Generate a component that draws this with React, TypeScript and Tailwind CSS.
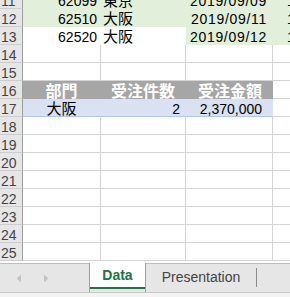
import React from "react";

const GRID = "border-[#d4d4d4]";
const NUM = "font-['Liberation_Sans',Arial,sans-serif] text-[14px] leading-none text-black";
const JP = "font-['Noto_Sans_CJK_JP','Noto_Sans_CJK_SC',sans-serif] text-[15px] leading-none text-black";
const HDR = "font-['Noto_Sans_CJK_JP','Noto_Sans_CJK_SC',sans-serif] text-[16px] leading-none font-bold text-white";

function RowHead({ n }: { n: number }) {
  return (
    <div className="w-[23px] shrink-0 h-full bg-[#e6e6e6] border-r border-r-[#9e9e9e] border-b border-b-[#cdcdcd] flex items-center pl-[1px] pt-[2px]">
      <span className={"font-['Liberation_Sans',Arial,sans-serif] text-[14px] leading-none text-[#444]"}>{n}</span>
    </div>
  );
}

function EmptyRow({ n }: { n: number }) {
  return (
    <div className="flex h-[18px]">
      <RowHead n={n} />
      <div className={"w-[78px] shrink-0 border-r border-b " + GRID} />
      <div className={"w-[85px] shrink-0 border-r border-b " + GRID} />
      <div className={"w-[87px] shrink-0 border-r border-b " + GRID} />
      <div className={"flex-1 border-b " + GRID} />
    </div>
  );
}

function DataRow({
  n,
  id,
  city,
  date,
  greenLeft,
}: {
  n: number;
  id: string;
  city: string;
  date: string;
  greenLeft: boolean;
}) {
  const left = greenLeft ? "bg-[#e2efda] border-[#e2efda]" : "bg-white border-white";
  const right = "bg-[#e2efda] border-[#e2efda]";
  return (
    <div className="flex h-[18px]">
      <RowHead n={n} />
      <div className={"w-[78px] shrink-0 border-r border-b flex items-center justify-end pr-[3px] pt-[2px] " + left}>
        <span className={NUM}>{id}</span>
      </div>
      <div className={"w-[85px] shrink-0 border-r border-b flex items-center pl-[2px] " + left}>
        <span className={JP}>{city}</span>
      </div>
      <div className={"w-[87px] shrink-0 border-r border-b flex items-center justify-end pr-[5px] pt-[2px] " + right}>
        <span className={NUM + " tracking-[0.7px]"}>{date}</span>
      </div>
      <div className={"flex-1 border-b flex items-center pl-[14px] pt-[2px] overflow-hidden " + right}>
        <span className={NUM}>1</span>
      </div>
    </div>
  );
}

function TableHeaderRow() {
  const g = "bg-[#a6a6a6] border-[#a6a6a6]";
  return (
    <div className="flex h-[18px]">
      <RowHead n={16} />
      <div className={"w-[78px] shrink-0 border-r border-b flex items-center justify-center " + g}>
        <span className={HDR}>部門</span>
      </div>
      <div className={"w-[85px] shrink-0 border-r border-b flex items-center justify-center " + g}>
        <span className={HDR}>受注件数</span>
      </div>
      <div className={"w-[87px] shrink-0 border-r border-b flex items-center justify-center pl-[2px] " + g}>
        <span className={HDR}>受注金額</span>
      </div>
      <div className={"flex-1 border-b " + GRID} />
    </div>
  );
}

function TableBodyRow() {
  const b = "bg-[#d9e1f2] border-[#d9e1f2] border-b-[#b4c6e7]";
  return (
    <div className="flex h-[18px]">
      <RowHead n={17} />
      <div className={"w-[78px] shrink-0 border-r border-b flex items-center justify-center " + b}>
        <span className={JP}>大阪</span>
      </div>
      <div className={"w-[85px] shrink-0 border-r border-b flex items-center justify-end pr-[5px] pt-[2px] " + b}>
        <span className={NUM}>2</span>
      </div>
      <div className={"w-[87px] shrink-0 border-r border-b flex items-center justify-end pr-[10px] pt-[2px] " + b}>
        <span className={NUM}>2,370,000</span>
      </div>
      <div className={"flex-1 border-b " + GRID} />
    </div>
  );
}

export default function App() {
  return (
    <div className="w-[290px] h-[297px] overflow-hidden bg-white flex flex-col">
      <div className="-mt-[9px] flex flex-col shrink-0">
        <DataRow n={11} id="62099" city="東京" date="2019/09/09" greenLeft={true} />
        <DataRow n={12} id="62510" city="大阪" date="2019/09/11" greenLeft={true} />
        <DataRow n={13} id="62520" city="大阪" date="2019/09/12" greenLeft={false} />
        <EmptyRow n={14} />
        <EmptyRow n={15} />
        <TableHeaderRow />
        <TableBodyRow />
        {[18, 19, 20, 21, 22, 23, 24, 25].map((n) => (
          <EmptyRow key={n} n={n} />
        ))}
      </div>
      <div className="h-[2px] shrink-0 bg-white" />
      {/* sheet tab bar */}
      <div className="h-[29px] shrink-0 flex bg-[#e6e6e6]">
        <div className="w-[89px] shrink-0 border-t border-[#bdbdbd] flex items-center">
          <svg width="6" height="9" viewBox="0 0 6 9" className="ml-[16px]">
            <path d="M5 0.5 L0.8 4.5 L5 8.5 Z" fill="#c3c3c3" />
          </svg>
          <svg width="6" height="9" viewBox="0 0 6 9" className="ml-[21px]">
            <path d="M1 0.5 L5.2 4.5 L1 8.5 Z" fill="#c3c3c3" />
          </svg>
        </div>
        <div className="w-[57px] shrink-0 flex flex-col border-l border-r border-[#a0a0a0]">
          <div className="h-[24px] bg-white flex items-center justify-center">
            <span className="font-['Liberation_Sans',Arial,sans-serif] text-[14px] font-bold text-[#217346] leading-none">
              Data
            </span>
          </div>
          <div className="h-[2px] bg-[#217346]" />
        </div>
        <div className="flex-1 border-t border-[#bdbdbd] flex items-start">
          <div className="w-[110px] h-[26px] flex items-center justify-center">
            <span className="font-['Liberation_Sans',Arial,sans-serif] text-[14px] text-[#444] leading-none">
              Presentation
            </span>
          </div>
          <div className="w-px h-[19px] mt-[4px] bg-[#8a8a8a]" />
        </div>
      </div>
      <div className="flex-1 bg-[#f3f3f3] border-t border-[#c8c8c8]" />
    </div>
  );
}
